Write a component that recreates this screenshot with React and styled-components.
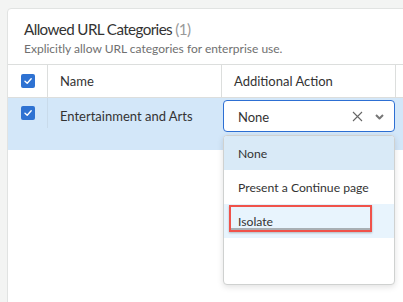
import React from 'react';
import styled, { createGlobalStyle } from 'styled-components';

const GlobalStyle = createGlobalStyle`
  html, body {
    margin: 0;
    padding: 0;
    background: #f3f4f3;
    font-family: 'Lato', 'Noto Sans', sans-serif;
    overflow: hidden;
  }
`;

const Page = styled.div`
  width: 403px;
  height: 302px;
  box-sizing: border-box;
  padding: 8px 0 0 7px;
  overflow: hidden;
`;

const Card = styled.div`
  width: 430px;
  height: 320px;
  box-sizing: border-box;
  background: #fff;
  border: 1px solid #e1e3e2;
  border-radius: 4px;
  display: flex;
  flex-direction: column;
`;

const CardHeader = styled.div`
  padding: 9px 16px 7px;
`;

const Title = styled.h2`
  margin: 0;
  font-size: 15.2px;
  letter-spacing: -0.6px;
  font-weight: 400;
  line-height: 22px;
  color: #333;
`;

const Count = styled.span`
  color: #999;
`;

const Subtitle = styled.p`
  margin: 1px 0 0;
  font-size: 12px;
  line-height: 16px;
  color: #707070;
`;

const Grid = styled.div`
  display: grid;
  grid-template-columns: 40px 174px 174px 1fr;
  border-top: 1px solid #dcdedd;
`;

const HeadCell = styled.div`
  height: 33px;
  box-sizing: border-box;
  border-bottom: 1px solid #dcdedd;
  border-right: ${p => (p.$last ? 'none' : '1px solid #dcdedd')};
  display: flex;
  align-items: center;
  justify-content: ${p => (p.$center ? 'center' : 'flex-start')};
  padding-left: ${p => (p.$center ? '0' : '12px')};
  font-size: 13px;
  color: #333;
`;

const BodyCell = styled.div`
  position: relative;
  height: 52px;
  box-sizing: border-box;
  background: #d3e7f9;
  display: flex;
  align-items: flex-start;
  justify-content: ${p => (p.$center ? 'center' : 'flex-start')};
  padding: ${p => p.$pad || '0'};
  font-size: 13px;
  color: #333;
`;

const RowDivider = styled.div`
  position: absolute;
  right: 0;
  top: 0;
  width: 1px;
  height: 30px;
  background: #c9dbeb;
`;

const Check = styled.span`
  width: 14px;
  height: 14px;
  border-radius: 2px;
  background: #2e72d2;
  display: inline-flex;
  align-items: center;
  justify-content: center;
`;

const Select = styled.div`
  width: 172px;
  height: 32px;
  box-sizing: border-box;
  border: 1.5px solid #2d6fd3;
  border-radius: 4px;
  background: #fff;
  display: flex;
  align-items: center;
  padding: 1px 10px 0 14px;
  font-size: 13px;
  color: #333;
`;

const Value = styled.span`
  flex: 1;
`;

const IconBtn = styled.span`
  display: inline-flex;
  margin-left: ${p => p.$gap || '0'};
`;

const Menu = styled.div`
  position: absolute;
  left: 1px;
  top: 37px;
  width: 172px;
  height: 150px;
  box-sizing: border-box;
  background: #fff;
  border: 1px solid #cfd1d0;
  border-radius: 4px;
  box-shadow: 0 2px 6px rgba(0, 0, 0, 0.12);
  overflow: hidden;
  z-index: 2;
`;

const Option = styled.div`
  position: relative;
  height: 34px;
  box-sizing: border-box;
  display: flex;
  align-items: center;
  padding-left: 14px;
  font-size: 12.2px;
  color: #333;
  background: ${p => p.$bg || '#fff'};
`;

const Highlight = styled.span`
  position: absolute;
  left: 5px;
  top: 1px;
  width: 143px;
  height: 27px;
  box-sizing: border-box;
  border: 2px solid #f0524a;
  box-shadow: inset 0 -2px 0 rgba(90, 90, 90, 0.45), 0 1px 2px rgba(0, 0, 0, 0.25);
`;

const CheckIcon = () => (
  <svg width="10" height="10" viewBox="0 0 10 10">
    <path d="M2 5.2 L4.2 7.2 L8.2 2.8" fill="none" stroke="#fff" strokeWidth="1.4" strokeLinecap="round" strokeLinejoin="round" />
  </svg>
);

const ClearIcon = () => (
  <svg width="11" height="11" viewBox="0 0 11 11">
    <path d="M1 1 L10 10 M10 1 L1 10" stroke="#666" strokeWidth="1.1" />
  </svg>
);

const ChevronIcon = () => (
  <svg width="9" height="6" viewBox="0 0 9 6">
    <path d="M1 1 L4.5 4.5 L8 1" fill="none" stroke="#777" strokeWidth="2" strokeLinejoin="round" />
  </svg>
);

const options = ['None', 'Present a Continue page', 'Isolate'];

const App = () => {
  return (
    <Page>
      <GlobalStyle />
      <Card>
        <CardHeader>
          <Title>
            Allowed URL Categories <Count>(1)</Count>
          </Title>
          <Subtitle>Explicitly allow URL categories for enterprise use.</Subtitle>
        </CardHeader>
        <Grid>
          <HeadCell $center>
            <Check><CheckIcon /></Check>
          </HeadCell>
          <HeadCell>Name</HeadCell>
          <HeadCell>Additional Action</HeadCell>
          <HeadCell $last />

          <BodyCell $center $pad="8px 0 0">
            <Check><CheckIcon /></Check>
            <RowDivider />
          </BodyCell>
          <BodyCell $pad="10px 0 0 12px">Entertainment and Arts</BodyCell>
          <BodyCell $pad="2px 0 0 1px">
            <Select>
              <Value>None</Value>
              <IconBtn><ClearIcon /></IconBtn>
              <IconBtn $gap="12px"><ChevronIcon /></IconBtn>
            </Select>
            <Menu>
              {options.map((o, i) => (
                <Option key={o} $bg={i === 0 ? '#d9eaf7' : i === 2 ? '#e8f4fd' : '#fff'}>
                  {i === 2 && <Highlight />}
                  {o}
                </Option>
              ))}
            </Menu>
          </BodyCell>
          <BodyCell />
        </Grid>
      </Card>
    </Page>
  );
};

export default App;
